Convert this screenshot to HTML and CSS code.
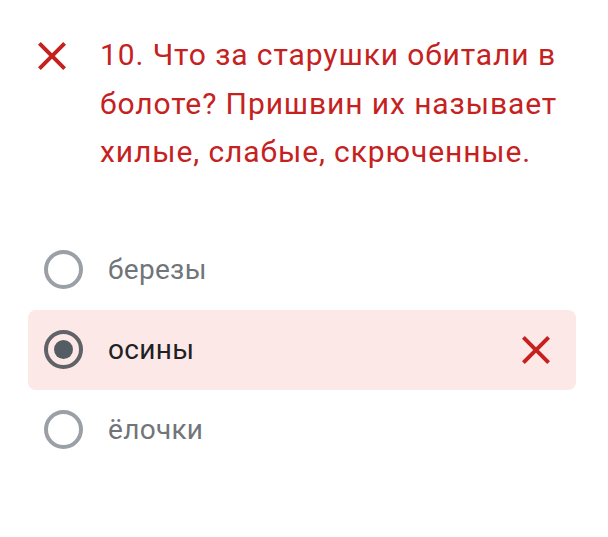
FILE: index.html
```html
<!DOCTYPE html>
<html lang="ru">
<head>
    <meta charset="UTF-8">
    <meta name="viewport" content="width=device-width, initial-scale=1.0">
    <title>Вопрос 10</title>
    <link rel="stylesheet" href="styles.css">
</head>
<body>

    <div class="question">
        <svg class="mark" viewBox="5 5 14 14" aria-hidden="true">
            <path d="M19 6.41L17.59 5 12 10.59 6.41 5 5 6.41 10.59 12 5 17.59 6.41 19 12 13.41 17.59 19 19 17.59 13.41 12z"/>
        </svg>
        <p class="title">10. Что за старушки обитали в болоте? Пришвин их называет хилые, слабые, скрюченные.</p>
    </div>

    <!-- Answer options -->
    <div class="options">
        <div class="option">
            <span class="radio"></span>
            <span class="label">березы</span>
        </div>
        <div class="option selected wrong">
            <span class="radio"></span>
            <span class="label">осины</span>
            <svg class="mark" viewBox="5 5 14 14" aria-hidden="true">
                <path d="M19 6.41L17.59 5 12 10.59 6.41 5 5 6.41 10.59 12 5 17.59 6.41 19 12 13.41 17.59 19 19 17.59 13.41 12z"/>
            </svg>
        </div>
        <div class="option">
            <span class="radio"></span>
            <span class="label">ёлочки</span>
        </div>
    </div>

</body>
</html>
```

FILE: styles.css
```css
/* Global styles */
body, html {
    margin: 0;
    padding: 0;
    background-color: #ffffff;
    font-family: Roboto, "Noto Sans", sans-serif;
}

/* Question header */
.question {
    display: flex;
    align-items: flex-start;
    padding: 31px 30px 0 38px;
}

.question .mark {
    width: 28px;
    height: 28px;
    margin-top: 11px;
    margin-right: 34px;
    flex-shrink: 0;
}

.mark path {
    fill: #c5221f;
}

.title {
    margin: 0;
    color: #c5221f;
    font-size: 30px;
    line-height: 48.5px;
    letter-spacing: 0.9px;
}

/* Options list */
.options {
    margin-top: 53px;
    display: flex;
    flex-direction: column;
}

.option {
    display: flex;
    align-items: center;
    height: 80px;
    margin: 0 32px 0 28px;
    padding: 0 26px 0 16px;
    border-radius: 8px;
    box-sizing: border-box;
}

.option.wrong {
    background-color: #fce8e6;
}

.radio {
    width: 39px;
    height: 39px;
    border: 4px solid #9aa0a6;
    border-radius: 50%;
    box-sizing: border-box;
    flex-shrink: 0;
    position: relative;
}

.selected .radio {
    border-color: #5f6368;
}

.selected .radio::after {
    content: "";
    position: absolute;
    left: 6px;
    top: 6px;
    width: 19px;
    height: 19px;
    border-radius: 50%;
    background-color: #545d64;
}

.label {
    flex: 1;
    margin-left: 25px;
    font-size: 28px;
    letter-spacing: 0.3px;
    color: #70757a;
}

.selected .label {
    color: #202124;
}

.option .mark {
    width: 28px;
    height: 28px;
    flex-shrink: 0;
}
```
